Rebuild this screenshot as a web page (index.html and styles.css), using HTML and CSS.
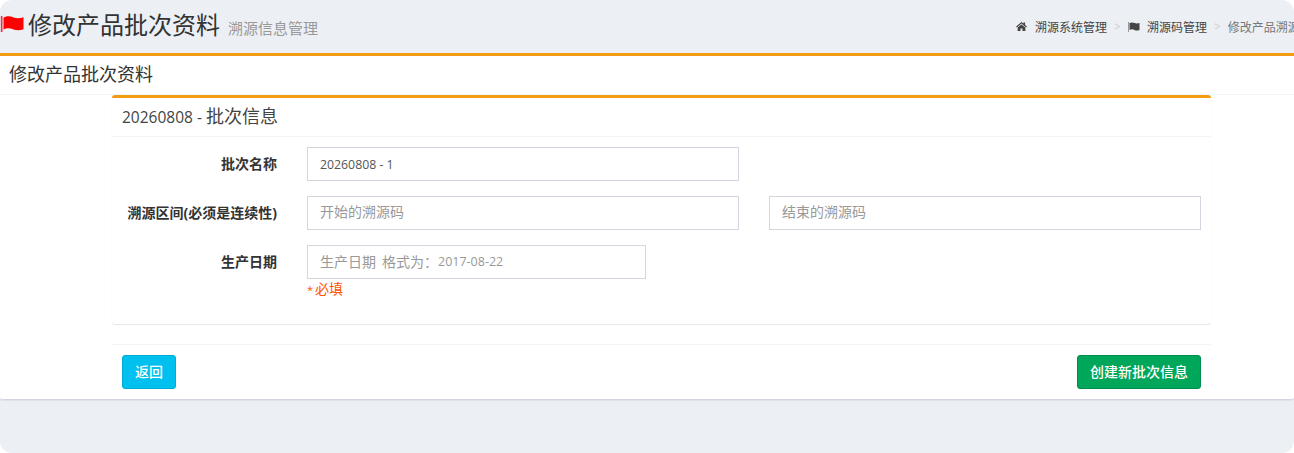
FILE: index.html
```html
<!DOCTYPE html>
<html lang="zh">
<head>
<meta charset="utf-8">
<title>修改产品批次资料</title>
<link rel="stylesheet" href="styles.css">
</head>
<body>
<div class="page">
  <header class="top">
    <h1 class="title">
      <svg class="flag" viewBox="0 0 24 16" aria-hidden="true"><path fill="#f0303f" d="M.8 0h1.700v16H.8z"/><path fill="#f00" d="M3.500 1.800C7 -.3 10 0 13 1.200s6.500 1.300 10.500 0v12c-4 1.500-7.500 1.200-10.500 0S7 11.500 3.500 13.500z"/></svg>
      <span>修改产品批次资料</span><small class="sub">溯源信息管理</small>
    </h1>
    <nav class="crumbs">
      <svg class="ci home" viewBox="0 0 12 10" aria-hidden="true"><path fill="#444" d="M6 0 0 5l.8 1L6 1.800 11.200 6l.8-1-2-1.700V.6H8.200v1.200zM1.700 6v4h3.200V7.200h2.200V10h3.200V6L6 2.700z"/></svg>
      <a class="ca">溯源系统管理</a><span class="sep">&gt;</span>
      <svg class="ci flagi" viewBox="0 0 12 10" aria-hidden="true"><path fill="#999" d="M0 0h1v10H0z"/><path fill="#444" d="M1.500 1c2-.8 3.500-.6 5 0s3 .6 5 0v7c-2 .8-3.500.8-5 0s-3-1-5 0z"/></svg>
      <a class="ca">溯源码管理</a><span class="sep">&gt;</span>
      <span class="cur">修改产品溯源码批次信息</span>
    </nav>
  </header>
  <section class="outer">
    <h2 class="outer-title">修改产品批次资料</h2>
    <div class="inner">
      <h3 class="inner-title"><span class="num">20260808 - </span>批次信息</h3>
      <form class="form">
        <div class="row">
          <label class="lab">批次名称</label>
          <input class="inp half val" value="20260808 - 1">
        </div>
        <div class="row">
          <label class="lab">溯源区间(必须是连续性)</label>
          <input class="inp half hint" placeholder="开始的溯源码">
          <input class="inp half hint gapl" placeholder="结束的溯源码">
        </div>
        <div class="row last">
          <label class="lab">生产日期</label>
          <div>
            <div class="inp date"><span class="ph">生产日期</span><span class="ph gapw">格式为：</span><span class="ph-num">2017-08-22</span></div>
            <div class="req"><span class="star">*</span>必填</div>
          </div>
        </div>
      </form>
    </div>
    <div class="foot">
      <button class="btn info" type="button">返回</button>
      <button class="btn ok" type="button">创建新批次信息</button>
    </div>
  </section>
</div>
</body>
</html>
```
FILE: styles.css
```css
* { box-sizing: border-box; }
html, body { margin: 0; padding: 0; background: #fff; }
body { font-family: "Open Sans", "Noto Sans CJK SC", sans-serif; font-size: 14px; color: #333; }
.page { height: 453px; background: #ecf0f5; border-radius: 12px; overflow: hidden; }
.top { height: 56px; border-bottom: 3px solid #f39c12; display: flex; justify-content: space-between; align-items: center; white-space: nowrap; overflow: hidden; }
.title { margin: -4px 0 0; font-size: 24px; font-weight: 400; line-height: 50px; color: #333; display: flex; align-items: center; }
.flag { width: 24px; height: 16px; margin: -2px 4px 0 0; flex: none; }
.sub { font-size: 15px; color: #999; margin-left: 8px; padding-top: 7px; }
.crumbs { display: flex; align-items: center; font-size: 12px; color: #444; width: 278px; flex: none; overflow: hidden; }
.ci { width: 11px; height: 9px; flex: none; margin-right: 8px; }
.flagi { width: 12px; height: 10px; margin-right: 7px; }
.sep { color: #ccc; margin: 0 7px; flex: none; }
.ca { flex: none; }
.cur { color: #777; flex: none; }
.outer { background: #fff; height: 344px; border-bottom: 1px solid #d2d6de; border-radius: 0 0 3px 3px; box-shadow: 0 1px 1px rgba(0,0,0,.06); }
.outer-title { margin: 0; height: 39px; padding-left: 9px; font-size: 18px; font-weight: 400; line-height: 37px; color: #333; border-bottom: 1px solid #f4f4f4; }
.inner { width: 1099px; height: 229px; margin-left: 112px; border-top: 3px solid #f39c12; border-radius: 3px; box-shadow: 0 1px 1px rgba(0,0,0,.1); }
.inner-title { margin: 0; height: 39px; padding-left: 10px; font-size: 18px; font-weight: 400; line-height: 37px; color: #444; border-bottom: 1px solid #f4f4f4; }
.num { font-size: 15.500px; }
.form { padding-top: 10px; }
.row { display: flex; align-items: flex-start; margin-bottom: 15px; }
.lab { width: 165px; margin-right: 30px; text-align: right; font-weight: 700; font-size: 14px; line-height: 33px; color: #333; flex: none; }
.inp { height: 34px; border: 1px solid #d2d6de; padding: 6px 12px; font: inherit; font-size: 14px; color: #555; background: #fff; border-radius: 0; outline: none; white-space: pre; }
.inp::placeholder { color: #999; opacity: 1; }
.hint { padding-bottom: 8px; padding-top: 4px; }
.val { font-size: 12.300px; }
.half { width: 432px; flex: none; }
.gapl { margin-left: 30px; }
.date { width: 339px; display: flex; align-items: center; color: #999; line-height: 20px; }
.gapw { margin-left: 6px; }
.ph-num { font-size: 12.500px; }
.req { color: #f50; font-size: 14px; line-height: 18px; margin-top: 1px; }
.star { display: inline-block; width: 8px; font-size: 11px; }
.foot { width: 1099px; margin: 20px 0 0 112px; border-top: 1px solid #f4f4f4; padding: 10px; display: flex; justify-content: space-between; }
.btn { height: 34px; border: 1px solid; border-radius: 3px; padding: 0 12px 2px; color: #fff; font: inherit; font-size: 14px; font-weight: 500; }
.info { background: #00c0ef; border-color: #00acd6; }
.ok { background: #00a65a; border-color: #008d4c; }
```
